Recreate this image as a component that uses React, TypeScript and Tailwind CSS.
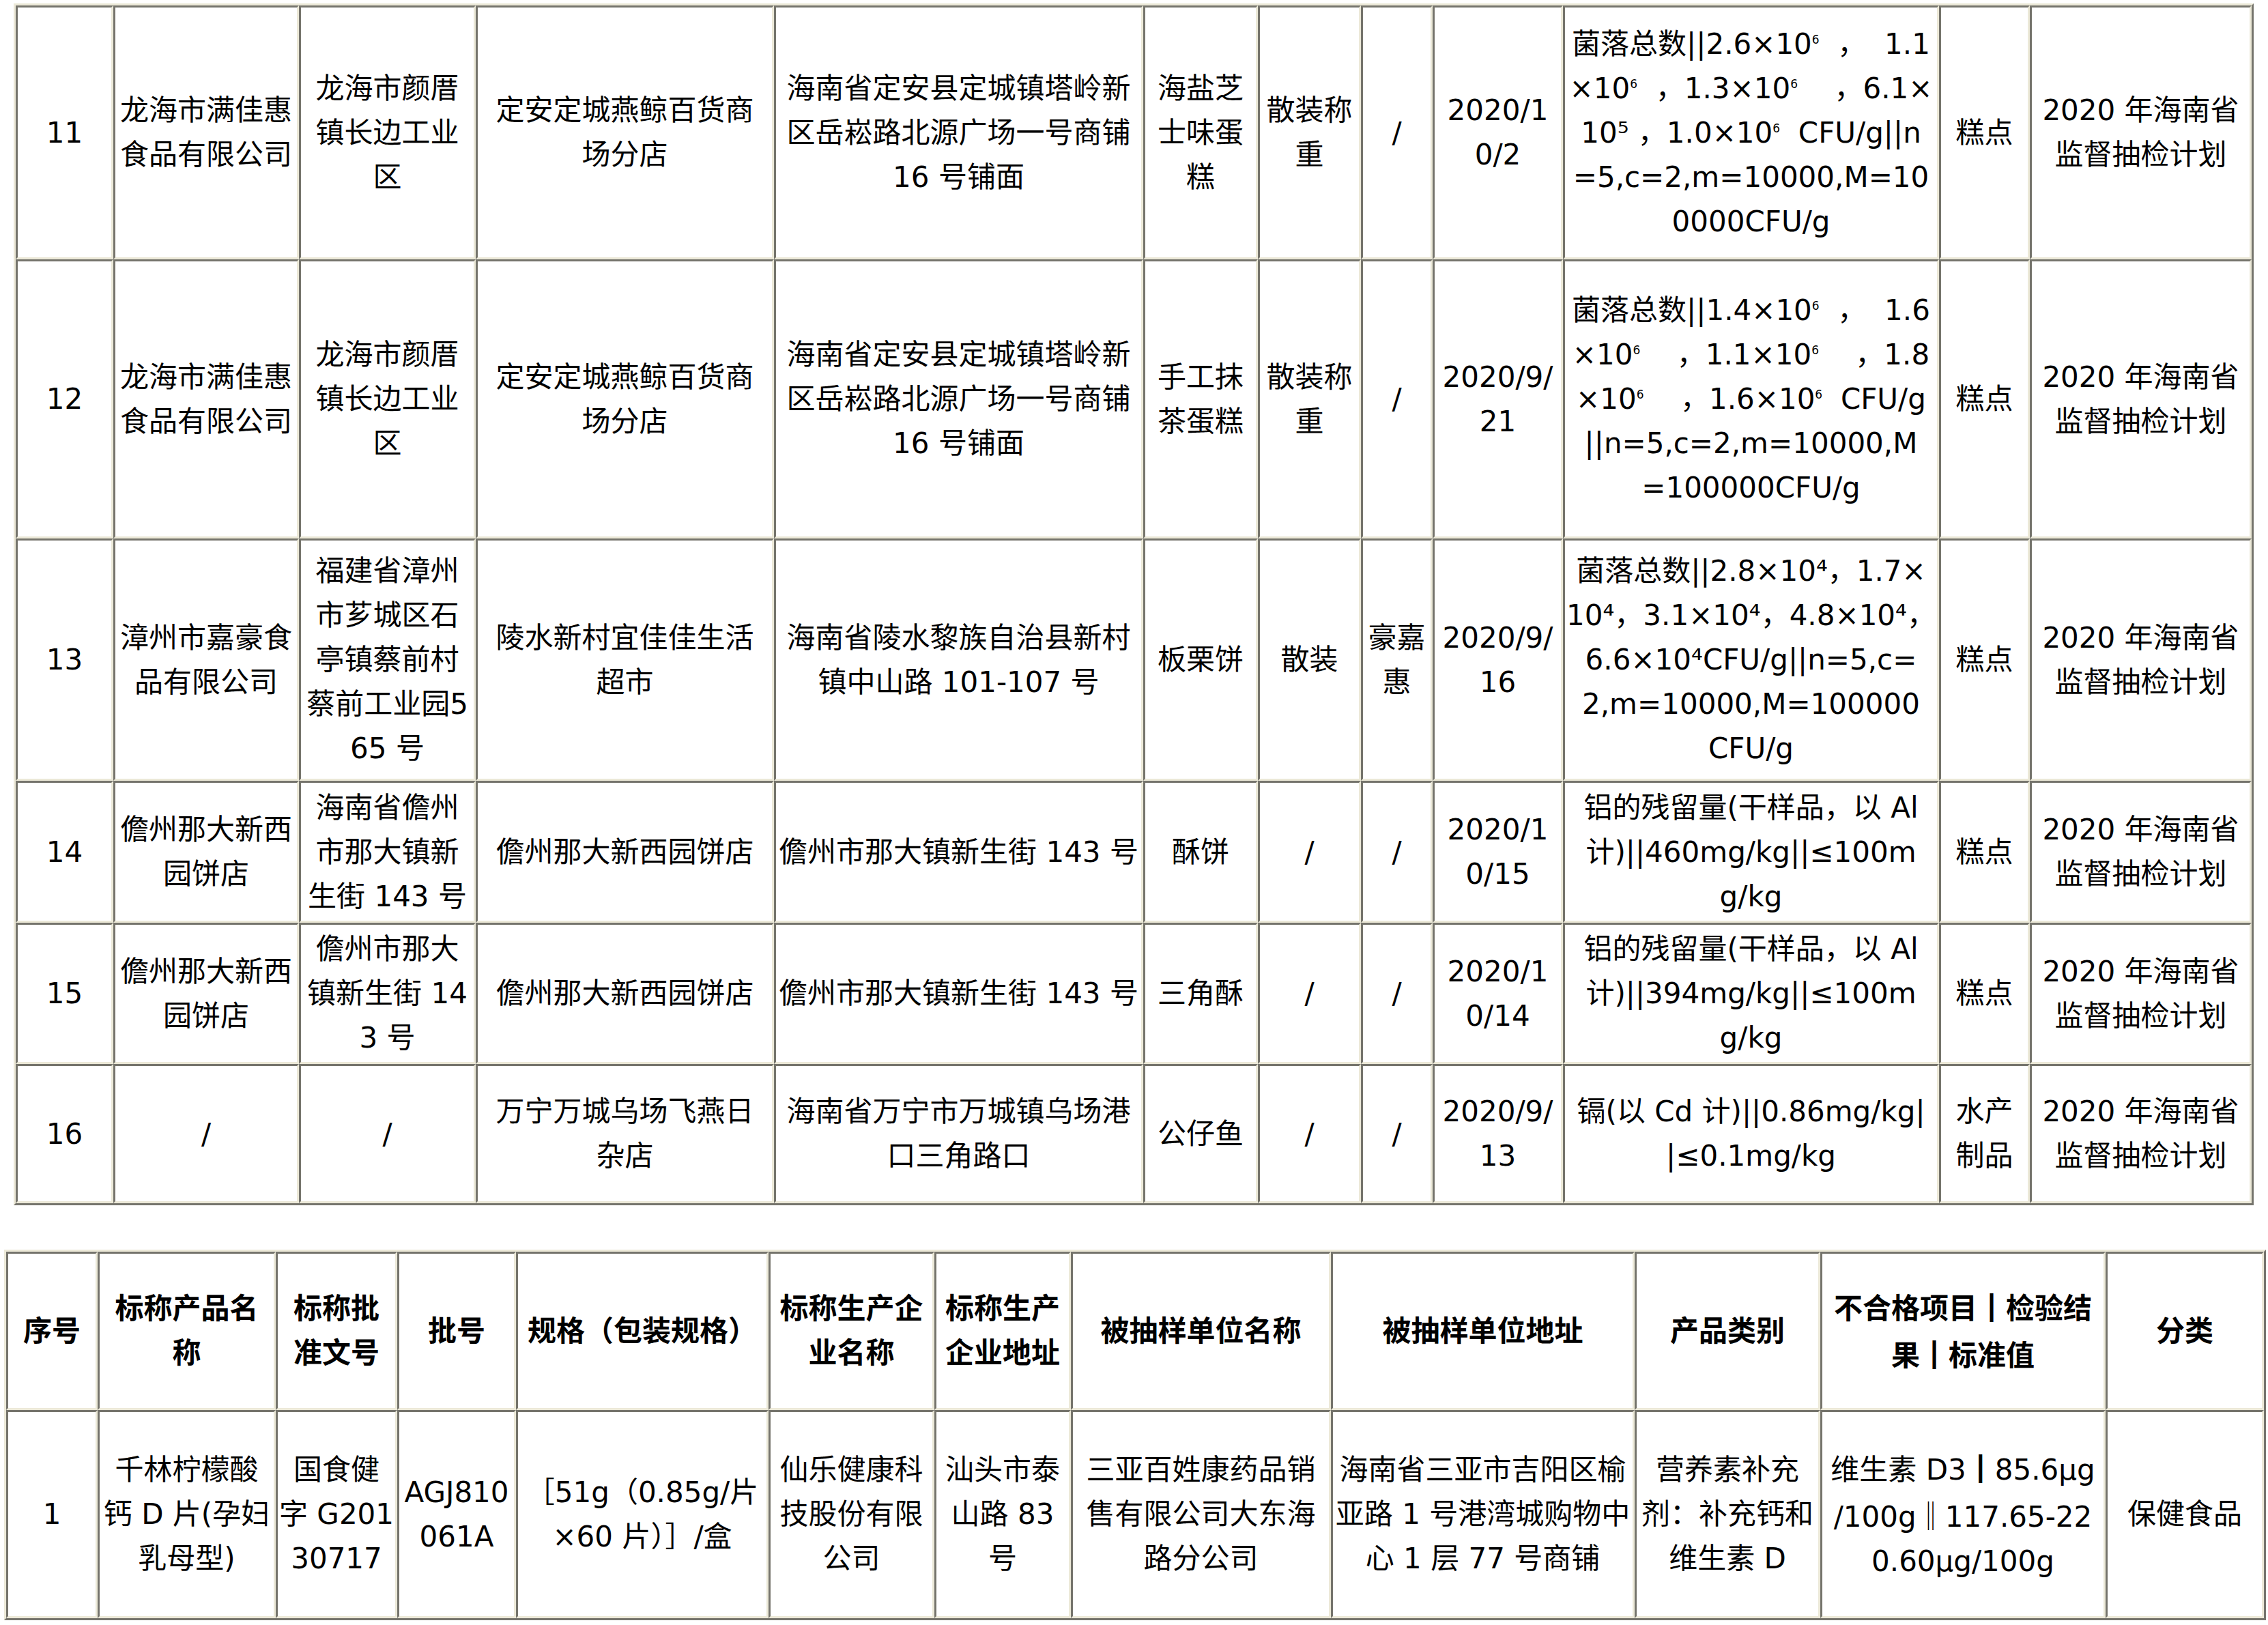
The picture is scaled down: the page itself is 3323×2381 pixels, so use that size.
import React from "react";

type Row = string[][];

const t1: Row[] = [
  [
    ["11"],
    ["龙海市满佳惠", "食品有限公司"],
    ["龙海市颜厝", "镇长边工业", "区"],
    ["定安定城燕鲸百货商", "场分店"],
    ["海南省定安县定城镇塔岭新", "区岳崧路北源广场一号商铺", "16 号铺面"],
    ["海盐芝", "士味蛋", "糕"],
    ["散装称", "重"],
    ["/"],
    ["2020/1", "0/2"],
    [
      "菌落总数||2.6×10^6  ，  1.1",
      "×10^6  ，1.3×10^6    ，6.1×",
      "10⁵ ，1.0×10^6  CFU/g||n",
      "=5,c=2,m=10000,M=10",
      "0000CFU/g",
    ],
    ["糕点"],
    ["2020 年海南省", "监督抽检计划"],
  ],
  [
    ["12"],
    ["龙海市满佳惠", "食品有限公司"],
    ["龙海市颜厝", "镇长边工业", "区"],
    ["定安定城燕鲸百货商", "场分店"],
    ["海南省定安县定城镇塔岭新", "区岳崧路北源广场一号商铺", "16 号铺面"],
    ["手工抹", "茶蛋糕"],
    ["散装称", "重"],
    ["/"],
    ["2020/9/", "21"],
    [
      "菌落总数||1.4×10^6  ，  1.6",
      "×10^6    ，1.1×10^6    ，1.8",
      "×10^6    ，1.6×10^6  CFU/g",
      "||n=5,c=2,m=10000,M",
      "=100000CFU/g",
    ],
    ["糕点"],
    ["2020 年海南省", "监督抽检计划"],
  ],
  [
    ["13"],
    ["漳州市嘉豪食", "品有限公司"],
    ["福建省漳州", "市芗城区石", "亭镇蔡前村", "蔡前工业园5", "65 号"],
    ["陵水新村宜佳佳生活", "超市"],
    ["海南省陵水黎族自治县新村", "镇中山路 101-107 号"],
    ["板栗饼"],
    ["散装"],
    ["豪嘉", "惠"],
    ["2020/9/", "16"],
    [
      "菌落总数||2.8×10⁴，1.7×",
      "10⁴，3.1×10⁴，4.8×10⁴，",
      "6.6×10⁴CFU/g||n=5,c=",
      "2,m=10000,M=100000",
      "CFU/g",
    ],
    ["糕点"],
    ["2020 年海南省", "监督抽检计划"],
  ],
  [
    ["14"],
    ["儋州那大新西", "园饼店"],
    ["海南省儋州", "市那大镇新", "生街 143 号"],
    ["儋州那大新西园饼店"],
    ["儋州市那大镇新生街 143 号"],
    ["酥饼"],
    ["/"],
    ["/"],
    ["2020/1", "0/15"],
    ["铝的残留量(干样品，以 Al", "计)||460mg/kg||≤100m", "g/kg"],
    ["糕点"],
    ["2020 年海南省", "监督抽检计划"],
  ],
  [
    ["15"],
    ["儋州那大新西", "园饼店"],
    ["儋州市那大", "镇新生街 14", "3 号"],
    ["儋州那大新西园饼店"],
    ["儋州市那大镇新生街 143 号"],
    ["三角酥"],
    ["/"],
    ["/"],
    ["2020/1", "0/14"],
    ["铝的残留量(干样品，以 Al", "计)||394mg/kg||≤100m", "g/kg"],
    ["糕点"],
    ["2020 年海南省", "监督抽检计划"],
  ],
  [
    ["16"],
    ["/"],
    ["/"],
    ["万宁万城乌场飞燕日", "杂店"],
    ["海南省万宁市万城镇乌场港", "口三角路口"],
    ["公仔鱼"],
    ["/"],
    ["/"],
    ["2020/9/", "13"],
    ["镉(以 Cd 计)||0.86mg/kg|", "|≤0.1mg/kg"],
    ["水产", "制品"],
    ["2020 年海南省", "监督抽检计划"],
  ],
];

const t2Head: Row = [
  ["序号"],
  ["标称产品名", "称"],
  ["标称批", "准文号"],
  ["批号"],
  ["规格（包装规格）"],
  ["标称生产企", "业名称"],
  ["标称生产", "企业地址"],
  ["被抽样单位名称"],
  ["被抽样单位地址"],
  ["产品类别"],
  ["不合格项目┃检验结", "果┃标准值"],
  ["分类"],
];

const t2Data: Row = [
  ["1"],
  ["千林柠檬酸", "钙 D 片(孕妇", "乳母型)"],
  ["国食健", "字 G201", "30717"],
  ["AGJ810", "061A"],
  ["［51g（0.85g/片", "×60 片）］/盒"],
  ["仙乐健康科", "技股份有限", "公司"],
  ["汕头市泰", "山路 83", "号"],
  ["三亚百姓康药品销", "售有限公司大东海", "路分公司"],
  ["海南省三亚市吉阳区榆", "亚路 1 号港湾城购物中", "心 1 层 77 号商铺"],
  ["营养素补充", "剂：补充钙和", "维生素 D"],
  ["维生素 D3┃85.6μg", "/100g‖117.65-22", "0.60μg/100g"],
  ["保健食品"],
];

function renderLine(s: string) {
  const parts = s.split(/(\^\d|┃|‖)/);
  return parts.map((p, i) => {
    if (p.startsWith("^")) {
      return (
        <span key={i} className="relative -top-[15px] text-[17px] leading-none">
          {p.slice(1)}
        </span>
      );
    }
    if (p === "┃" || p === "‖") {
      return (
        <span key={i} className="font-['Noto_Sans_CJK_SC',sans-serif]">
          {p}
        </span>
      );
    }
    return <React.Fragment key={i}>{p}</React.Fragment>;
  });
}

function Cell({ lines, bold }: { lines: string[]; bold?: boolean }) {
  return (
    <div className="flex flex-col justify-center overflow-visible border-[3px] border-t-[#75746c] border-l-[#75746c] border-b-[#ece9d8] border-r-[#ece9d8] px-[2px]">
      {lines.map((l, i) => (
        <div
          key={i}
          className={
            "whitespace-pre text-center leading-[65px] " + (bold ? "font-bold" : "font-normal")
          }
        >
          {renderLine(l)}
        </div>
      ))}
    </div>
  );
}

export default function App() {
  return (
    <div className="min-h-[2381px] w-full bg-white pt-[5px] text-[42px] text-black font-['DejaVu_Sans','Noto_Sans_CJK_SC',sans-serif]">
      <div className="ml-[20px] w-[3282px] border-[3px] border-t-[#ece9d8] border-l-[#ece9d8] border-b-[#75746c] border-r-[#75746c]">
        <div className="grid grid-cols-[143px_272px_259px_437px_541px_168px_151px_105px_191px_551px_133px_325px] grid-rows-[372px_409px_355px_208px_207px_204px]">
          {t1.map((row, r) =>
            row.map((cell, c) => <Cell key={r + "-" + c} lines={cell} />)
          )}
        </div>
      </div>

      <div className="ml-[6px] mt-[65px] w-[3314px] border-[3px] border-t-[#ece9d8] border-l-[#ece9d8] border-b-[#75746c] border-r-[#75746c]">
        <div className="grid grid-cols-[134px_261px_178px_174px_370px_243px_200px_381px_445px_272px_418px_232px] grid-rows-[232px_305px]">
          {t2Head.map((cell, c) => (
            <Cell key={"h" + c} lines={cell} bold />
          ))}
          {t2Data.map((cell, c) => (
            <Cell key={"d" + c} lines={cell} />
          ))}
        </div>
      </div>
    </div>
  );
}
